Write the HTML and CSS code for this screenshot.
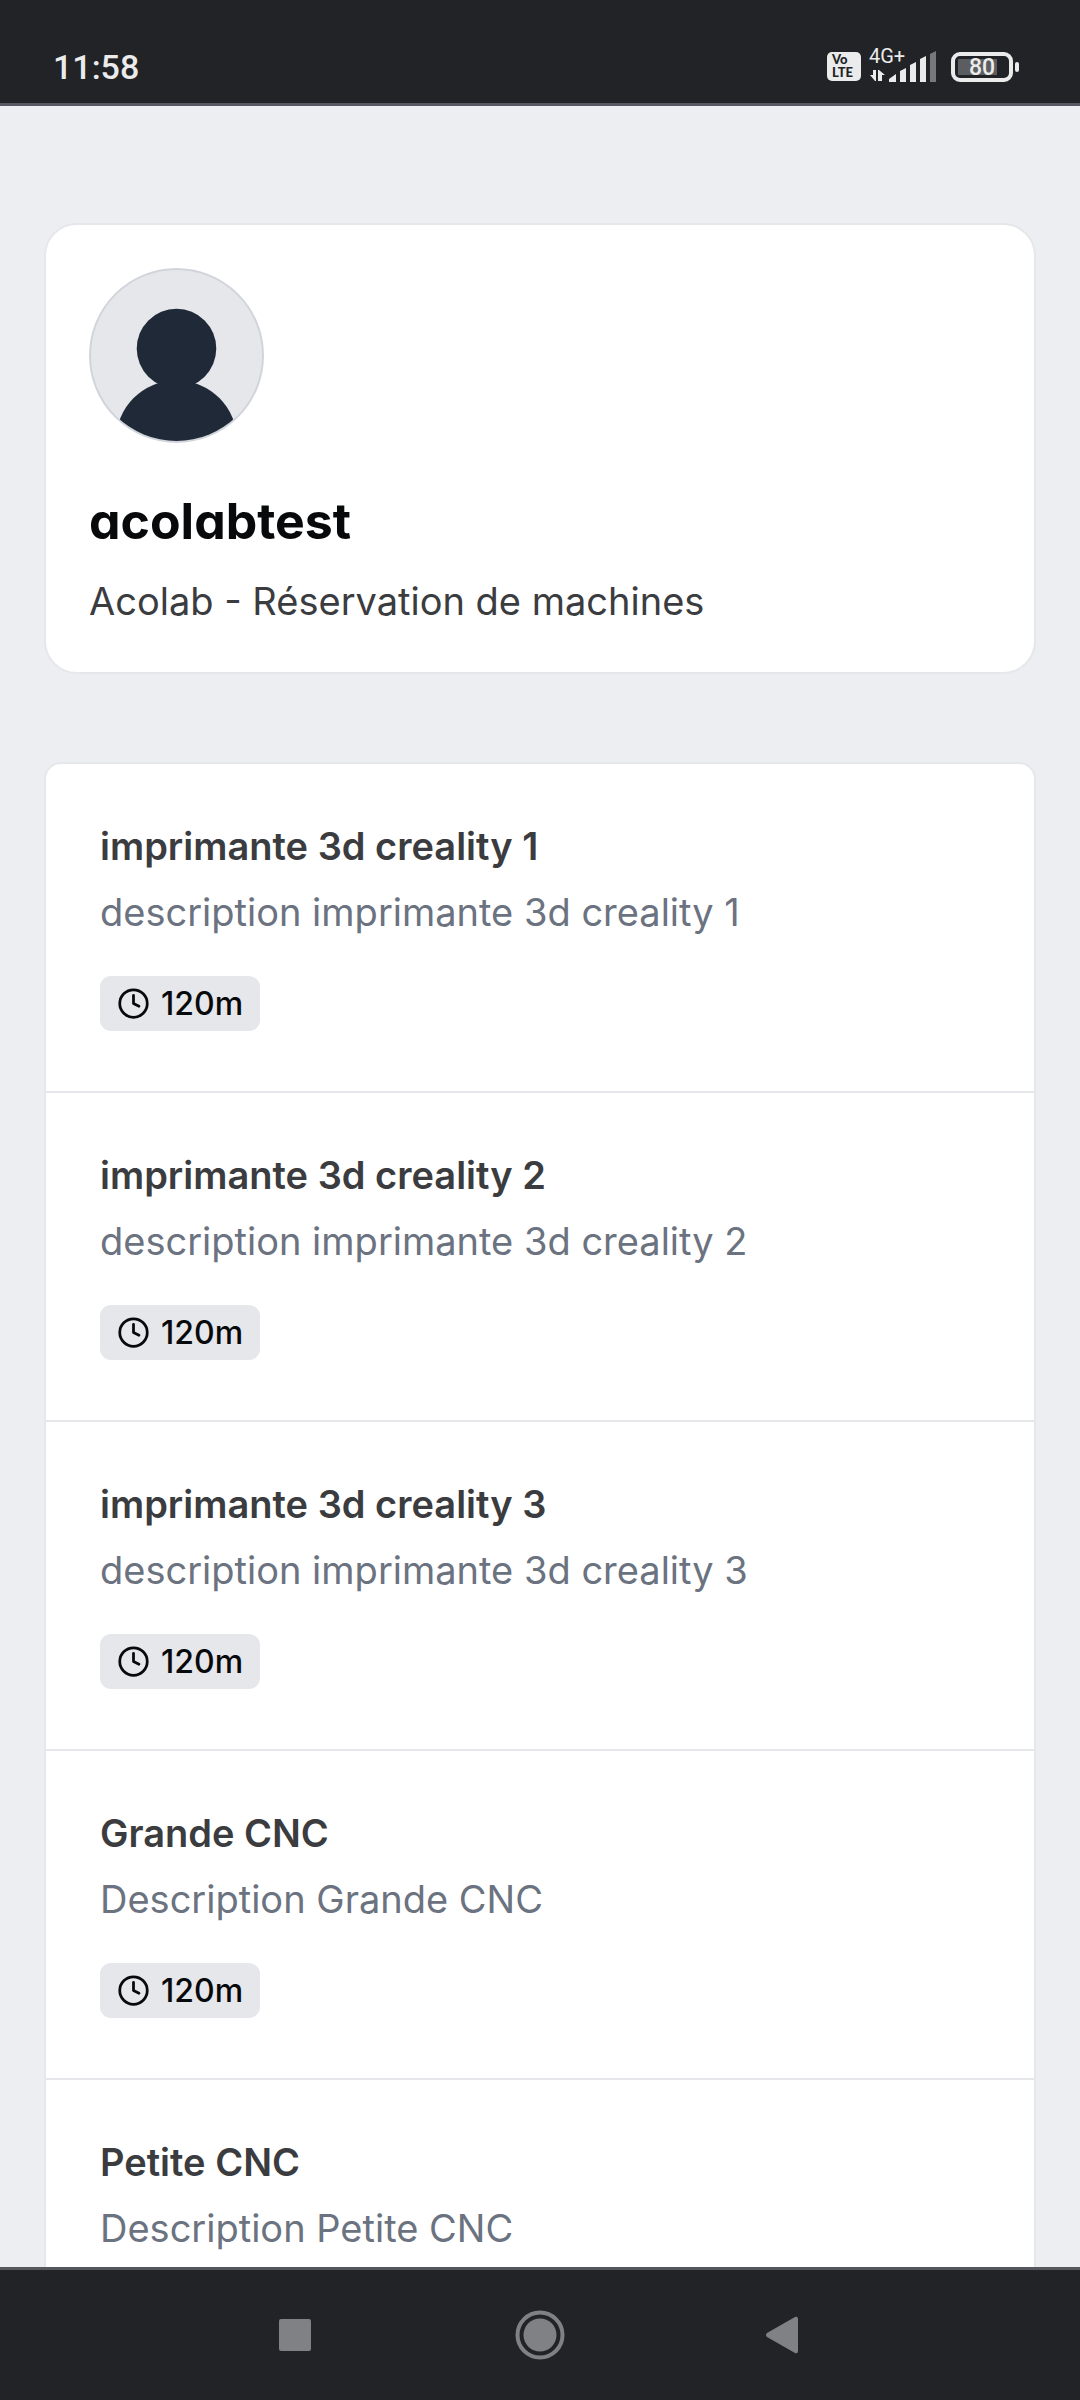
FILE: index.html
```html
<!DOCTYPE html>
<html lang="fr">
<head>
  <meta charset="UTF-8" />
  <meta name="viewport" content="width=device-width, initial-scale=1.0" />
  <title>acolabtest - Réservation de machines</title>
  <link rel="stylesheet" href="styles.css">
</head>
<body>

  <!-- reusable icons -->
  <svg class="sprite" aria-hidden="true">
    <symbol id="clock" viewBox="0 0 24 24">
      <circle cx="12" cy="12" r="10" />
      <path d="M12 6v6l4 2" />
    </symbol>
  </svg>

  <header class="status-bar">
    <span class="time">11:58</span>
    <div class="status-icons">
      <div class="volte"><span>Vo</span><span>LTE</span></div>
      <div class="network">
        <span class="network-type">4G+</span>
        <svg class="signal" viewBox="0 0 68 30" aria-hidden="true">
          <path d="M4 18h3v11H6l-5-6h3zM9 29V18h1l6 5h-3v6z" />
          <path d="M20 30v-3l7-5v8zM31 30V19l6-3v14zM41 30V13l6-3v20zM51 30V7l6-3v26z" />
          <path class="signal-off" d="M61 30V2l6-3v31z" />
        </svg>
      </div>
      <div class="battery"><span>80</span></div>
    </div>
  </header>

  <main>
    <section class="profile">
      <svg class="avatar" viewBox="0 0 176 176" role="img" aria-label="acolabtest">
        <clipPath id="avatar-clip"><circle cx="88" cy="88" r="86" /></clipPath>
        <circle class="avatar-bg" cx="88" cy="88" r="87" />
        <g class="avatar-person" clip-path="url(#avatar-clip)">
          <circle cx="88" cy="81" r="40" />
          <circle cx="88" cy="174" r="61" />
        </g>
      </svg>
      <h1>acolabtest</h1>
      <p>Acolab - Réservation de machines</p>
    </section>

    <ul class="machines">
      <li>
        <a href="#imprimante-1">
          <h2>imprimante 3d creality 1</h2>
          <p>description imprimante 3d creality 1</p>
          <span class="duration"><svg><use href="#clock" /></svg>120m</span>
        </a>
      </li>
      <li>
        <a href="#imprimante-2">
          <h2>imprimante 3d creality 2</h2>
          <p>description imprimante 3d creality 2</p>
          <span class="duration"><svg><use href="#clock" /></svg>120m</span>
        </a>
      </li>
      <li>
        <a href="#imprimante-3">
          <h2>imprimante 3d creality 3</h2>
          <p>description imprimante 3d creality 3</p>
          <span class="duration"><svg><use href="#clock" /></svg>120m</span>
        </a>
      </li>
      <li>
        <a href="#grande-cnc">
          <h2>Grande CNC</h2>
          <p>Description Grande CNC</p>
          <span class="duration"><svg><use href="#clock" /></svg>120m</span>
        </a>
      </li>
      <li>
        <a href="#petite-cnc">
          <h2>Petite CNC</h2>
          <p>Description Petite CNC</p>
        </a>
      </li>
    </ul>
  </main>

  <nav class="nav-bar">
    <button type="button" aria-label="Applications récentes">
      <svg viewBox="0 0 50 50"><rect x="9" y="9" width="32" height="32" rx="2" /></svg>
    </button>
    <button type="button" aria-label="Accueil">
      <svg viewBox="0 0 50 50">
        <circle class="ring" cx="25" cy="25" r="22.5" />
        <circle cx="25" cy="25" r="16.5" />
      </svg>
    </button>
    <button type="button" aria-label="Retour">
      <svg viewBox="0 0 50 50"><path d="M7 23 35 7q3-1 3 2v32q0 3-3 2L7 27q-2-2 0-4z" /></svg>
    </button>
  </nav>

</body>
</html>
```
FILE: styles.css
```css
* {
  box-sizing: border-box;
}
body {
  margin: 0;
  height: 100vh;
  display: flex;
  flex-direction: column;
  overflow: hidden;
  background: #edeef2;
  color: #3b3c40;
  font-family: Inter, "Liberation Sans", sans-serif;
  font-size: 38px;
  line-height: 55px;
}
h1, h2, p, ul {
  margin: 0;
  padding: 0;
}
.sprite {
  display: none;
}

/* status bar */
.status-bar {
  flex: none;
  height: 106px;
  padding: 30px 61px 0 53px;
  display: flex;
  align-items: center;
  justify-content: space-between;
  background: #222327;
  border-bottom: 3px solid #565861;
  color: #ebebeb;
  font-family: Roboto, sans-serif;
}
.time {
  font-size: 34px;
  font-weight: 500;
  line-height: 40px;
}
.status-icons {
  display: flex;
  align-items: center;
}
.volte {
  width: 34px;
  height: 29px;
  padding: 1px 5px;
  display: flex;
  flex-direction: column;
  border-radius: 5px;
  background: #ebebeb;
  color: #222327;
  font-family: Lato, sans-serif;
  font-size: 13px;
  font-weight: 900;
  line-height: 13px;
}
.network {
  position: relative;
  margin-left: 8px;
}
.network-type {
  position: absolute;
  left: 0;
  top: -6px;
  font-size: 20px;
  line-height: 20px;
}
.signal {
  display: block;
  width: 68px;
  height: 30px;
  fill: #ebebeb;
  overflow: visible;
}
.signal-off {
  fill: #77787b;
}
.battery {
  position: relative;
  width: 62px;
  height: 30px;
  margin-left: 14px;
  margin-right: 6px;
  border: 4px solid #ebebeb;
  border-radius: 9px;
  background: linear-gradient(#5c5d60, #5c5d60) 3px 3px / 39px 16px no-repeat;
  font-size: 23px;
  font-weight: 500;
  line-height: 23px;
  text-align: center;
}
.battery::after {
  content: "";
  position: absolute;
  right: -10px;
  top: 6px;
  width: 4px;
  height: 10px;
  border-radius: 2px;
  background: #ebebeb;
}

/* page */
main {
  flex: 1;
  min-height: 0;
  overflow: hidden;
  padding: 117px 44px 0;
}
.profile {
  padding: 43px;
  border: 2px solid #e5e7eb;
  border-radius: 33px;
  background: #fff;
}
.avatar {
  display: block;
  width: 175px;
  height: 175px;
}
.avatar-bg {
  fill: #e5e7eb;
  stroke: #d1d5db;
  stroke-width: 2;
}
.avatar-person {
  fill: #1f2937;
}
.profile h1 {
  margin-top: 42px;
  color: #08090b;
  font-size: 50px;
  font-weight: 700;
  line-height: 72px;
  font-feature-settings: "cv11";
}
.profile p {
  margin-top: 17px;
}

.machines {
  margin-top: 88px;
  list-style: none;
  border: 2px solid #e5e7eb;
  border-radius: 17px;
  background: #fff;
}
.machines li + li {
  border-top: 2px solid #e5e7eb;
}
.machines a {
  display: block;
  padding: 55px 54px 60px;
  color: inherit;
  text-decoration: none;
}
.machines h2 {
  font-size: 38px;
  font-weight: 600;
}
.machines p {
  margin-top: 11px;
  color: #6b7280;
}
.duration {
  display: flex;
  width: fit-content;
  align-items: center;
  gap: 11px;
  margin-top: 36px;
  padding: 0 17px;
  border-radius: 11px;
  background: #e5e7eb;
  color: #08090b;
  font-size: 32px;
  font-weight: 500;
}
.duration svg {
  width: 33px;
  height: 33px;
  fill: none;
  stroke: currentColor;
  stroke-width: 2;
  stroke-linecap: round;
  stroke-linejoin: round;
}

/* android navigation */
.nav-bar {
  flex: none;
  height: 133px;
  display: flex;
  align-items: center;
  justify-content: center;
  gap: 195px;
  background: #222327;
  border-top: 3px solid #54575c;
}
.nav-bar button {
  padding: 0;
  border: 0;
  background: none;
}
.nav-bar svg {
  display: block;
  width: 50px;
  height: 50px;
  fill: #808184;
}
.nav-bar .ring {
  fill: none;
  stroke: #808184;
  stroke-width: 4;
}
```
